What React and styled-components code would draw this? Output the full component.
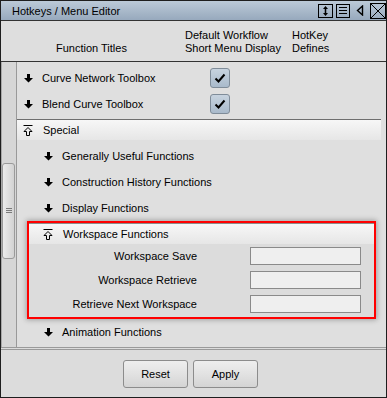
import React from 'react'
import styled, { createGlobalStyle } from 'styled-components'

const Global = createGlobalStyle`
  body { margin: 0; background: #dcdcdc; }
  * { box-sizing: border-box; }
`

const Window = styled.div`
  width: 387px; height: 398px;
  border: 1px solid #1e1e1e;
  background: #dcdcdc;
  display: flex; flex-direction: column;
  font-family: "Liberation Sans", Arial, sans-serif;
  font-size: 11px; color: #000;
`
const TitleBar = styled.div`
  height: 20px; flex: none;
  border-bottom: 1px solid #333;
  background: linear-gradient(#bccad8, #97a9bd);
  display: flex; align-items: center;
  padding: 0 0 0 11px;
`
const Title = styled.div`
  flex: 1;
`
const TitleIcons = styled.div`
  display: flex; align-items: center;
`
const IconSlot = styled.span`
  display: flex; margin-left: ${p => p.gap || 0}px;
`
const Header = styled.div`
  height: 41px; flex: none;
  border-bottom: 1px solid #333;
  background: #dedede;
  display: grid;
  grid-template-columns: 184px 107px 1fr;
  padding: 8px 0 6px;
  line-height: 13px;
`
const HeadCell = styled.div`
  padding-left: ${p => p.indent || 0}px;
  padding-top: ${p => (p.low ? 13 : 0)}px;
`
const Body = styled.div`
  flex: 1; display: flex; min-height: 0;
`
const Track = styled.div`
  width: 16px; flex: none;
  background: #d6d6d6;
  border-right: 1px solid #999;
  box-shadow: inset 1px 0 0 #a8a8a8;
  padding: 101px 1px 0 1px;
`
const Thumb = styled.div`
  height: 96px;
  border: 1px solid #9a9a9a;
  border-radius: 3px;
  background: linear-gradient(90deg, #ececec, #d2d2d2);
  display: flex; align-items: center; justify-content: center;
`
const Grip = styled.div`
  width: 6px; height: 6px;
  background: repeating-linear-gradient(#7a7a7a 0 1px, transparent 1px 2px);
  margin-left: 1px;
`
const List = styled.div`
  flex: 1;
  background: #dfdfdf;
  padding: 3px 5px 0 0;
`
const Row = styled.div`
  height: 26px;
  display: grid;
  grid-template-columns: ${p => (p.check ? '186px 20px' : '1fr')};
  align-items: center;
  padding-left: ${p => (p.level === 2 ? 27 : 7)}px;
`
const Label = styled.div`
  display: flex; align-items: center; gap: 9px;
  white-space: nowrap;
`
const Divider = styled.div`
  height: 1px; background: #6e6e6e;
  margin-top: ${p => p.top || 0}px;
`
const SectionHead = styled.div`
  height: 20px;
  background: linear-gradient(#f7f7f7, #e6e6e6);
  display: flex; align-items: center; gap: 10px;
  padding-left: ${p => p.indent}px;
`
const SubList = styled.div`
  padding-top: 3px;
`
const Highlight = styled.div`
  margin: 0 5px 0 10px;
  border: 2px solid #f00;
  box-shadow: 0 0 5px 1px rgba(0, 0, 0, 0.28);
  background: #dcdcdc;
  padding-bottom: 1px;
`
const InnerLine = styled.div`
  height: 1px; background: #8c8c8c;
`
const Field = styled.div`
  height: 24px;
  display: grid;
  grid-template-columns: 1fr 111px;
  column-gap: 53px;
  align-items: center;
  padding-right: 13px;
`
const FieldLabel = styled.div`
  text-align: right; white-space: nowrap;
`
const Input = styled.div`
  height: 18px;
  border: 1px solid #8a8a8a;
  background: #efefef;
`
const CheckBox = styled.div`
  width: 20px; height: 20px;
  border: 1px solid #7f8c99;
  border-radius: 3px;
  background: linear-gradient(#c7d3df, #a9bacb);
  display: flex; align-items: center; justify-content: center;
`
const Footer = styled.div`
  height: 50px; flex: none;
  border-top: 3px double #9a9a9a;
  padding: 10px 6px 0 0;
  display: flex; justify-content: center; gap: 5px;
`
const Button = styled.button`
  width: 65px; height: 28px;
  border: 1px solid #8c8c8c;
  border-radius: 3px;
  background: linear-gradient(#eeeeee, #e2e2e2 50%, #d4d4d4);
  font: inherit; color: #000;
  padding: 0;
`

const DownArrow = () => (
  <svg width="9" height="9" viewBox="0 0 9 9">
    <path d="M3 0h3v4h3L4.5 8.5 0 4h3z" fill="#000" />
  </svg>
)
const OpenArrow = () => (
  <svg width="10" height="11" viewBox="0 0 10 11">
    <path d="M0.5 0.5h9" stroke="#000" />
    <path d="M5 2.5L9 6.5H6.5V10.5H3.5V6.5H1z" fill="none" stroke="#000" />
  </svg>
)
const Tick = () => (
  <svg width="12" height="10" viewBox="0 0 12 10">
    <path d="M1.5 5.5l3 3 6-7" fill="none" stroke="#000" strokeWidth="2" />
  </svg>
)
const ResizeIcon = () => (
  <svg width="15" height="14" viewBox="0 0 15 14">
    <rect x="0.5" y="0.5" width="14" height="13" fill="none" stroke="#000" />
    <path d="M7.5 2L10 5H5zM7.5 12L10 9H5z" fill="#000" />
    <path d="M7.5 4.5v5" stroke="#000" strokeWidth="1.5" />
  </svg>
)
const MenuIcon = () => (
  <svg width="14" height="14" viewBox="0 0 14 14">
    <rect x="0.5" y="0.5" width="13" height="13" fill="none" stroke="#000" />
    <path d="M3 3.5h8M3 6.5h8M3 9.5h8" stroke="#000" />
  </svg>
)
const BackIcon = () => (
  <svg width="8" height="11" viewBox="0 0 8 11">
    <path d="M6.5 1L1.5 5.5 6.5 10z" fill="none" stroke="#000" strokeWidth="1.4" />
  </svg>
)
const CloseIcon = () => (
  <svg width="16" height="16" viewBox="0 0 16 16">
    <rect x="0.5" y="0.5" width="15" height="15" fill="none" stroke="#000" />
    <path d="M1 1l14 14M15 1L1 15" stroke="#000" />
  </svg>
)

const tools = ['Curve Network Toolbox', 'Blend Curve Toolbox']
const special = ['Generally Useful Functions', 'Construction History Functions', 'Display Functions']
const workspace = ['Workspace Save', 'Workspace Retrieve', 'Retrieve Next Workspace']

const App = () => {
  return (
    <Window>
      <Global />
      <TitleBar>
        <Title>Hotkeys / Menu Editor</Title>
        <TitleIcons>
          <IconSlot><ResizeIcon /></IconSlot>
          <IconSlot gap={3}><MenuIcon /></IconSlot>
          <IconSlot gap={6}><BackIcon /></IconSlot>
          <IconSlot gap={6}><CloseIcon /></IconSlot>
        </TitleIcons>
      </TitleBar>
      <Header>
        <HeadCell indent={55} low>Function Titles</HeadCell>
        <HeadCell>Default Workflow<br />Short Menu Display</HeadCell>
        <HeadCell>HotKey<br />Defines</HeadCell>
      </Header>
      <Body>
        <Track>
          <Thumb><Grip /></Thumb>
        </Track>
        <List>
          {tools.map(t => (
            <Row key={t} check>
              <Label><DownArrow />{t}</Label>
              <CheckBox><Tick /></CheckBox>
            </Row>
          ))}
          <Divider top={2} />
          <SectionHead indent={6}><OpenArrow />Special</SectionHead>
          <SubList>
            {special.map(t => (
              <Row key={t} level={2}>
                <Label><DownArrow />{t}</Label>
              </Row>
            ))}
          </SubList>
          <Highlight>
            <InnerLine />
            <SectionHead indent={14}><OpenArrow />Workspace Functions</SectionHead>
            {workspace.map(t => (
              <Field key={t}>
                <FieldLabel>{t}</FieldLabel>
                <Input />
              </Field>
            ))}
          </Highlight>
          <Row level={2}>
            <Label><DownArrow />Animation Functions</Label>
          </Row>
        </List>
      </Body>
      <Footer>
        <Button>Reset</Button>
        <Button>Apply</Button>
      </Footer>
    </Window>
  )
}

export default App
